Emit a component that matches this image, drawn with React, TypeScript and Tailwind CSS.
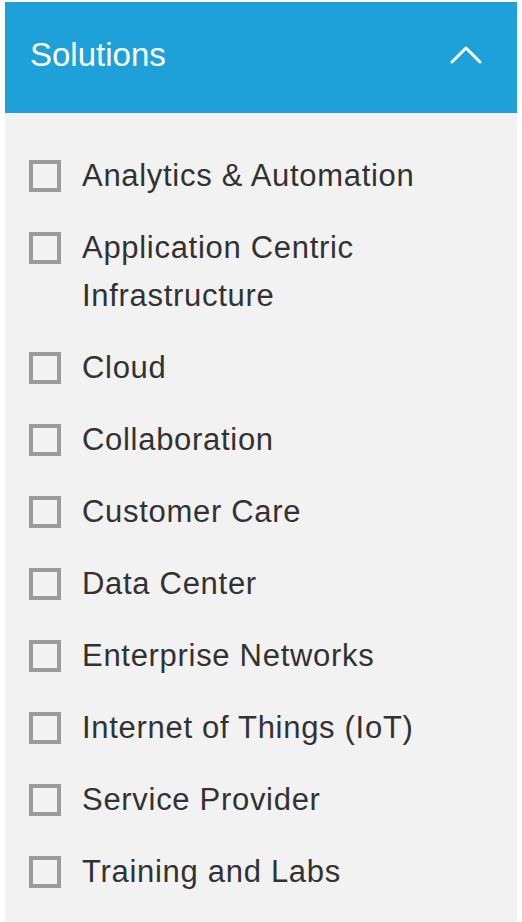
import React from 'react';

const items: string[] = [
  'Analytics & Automation',
  'Application Centric Infrastructure',
  'Cloud',
  'Collaboration',
  'Customer Care',
  'Data Center',
  'Enterprise Networks',
  'Internet of Things (IoT)',
  'Service Provider',
  'Training and Labs',
];

const App: React.FC = () => {
  return (
    <div
      className="min-h-[922px] bg-white px-[5px] pt-[2px] flex flex-col"
      style={{ fontFamily: '"Liberation Sans", Arial, sans-serif' }}
    >
      <div className="h-[111px] bg-[#1da1d8] flex items-center justify-between pl-[25px] pr-[35px] pb-[6px]">
        <h2 className="text-[33px] text-white leading-none">Solutions</h2>
        <svg width="32" height="18" viewBox="0 0 32 18" fill="none">
          <path d="M2 16 L16 2 L30 16" stroke="white" strokeWidth="3" strokeLinecap="round" strokeLinejoin="round" />
        </svg>
      </div>

      <div className="flex-1 bg-[#f2f2f2] pt-[39px] pb-[26px] pl-6 pr-6">
        <ul className="flex flex-col gap-6">
          {items.map((item) => (
            <li key={item} className="flex items-start gap-[21px]">
              <span className="mt-2 w-8 h-8 shrink-0 border-4 border-[#9b9b9b]" />
              <span className="text-[31px] leading-[48px] text-[#323232] tracking-[0.7px] max-w-[390px]">
                {item}
              </span>
            </li>
          ))}
        </ul>
      </div>
    </div>
  );
};

export default App;
